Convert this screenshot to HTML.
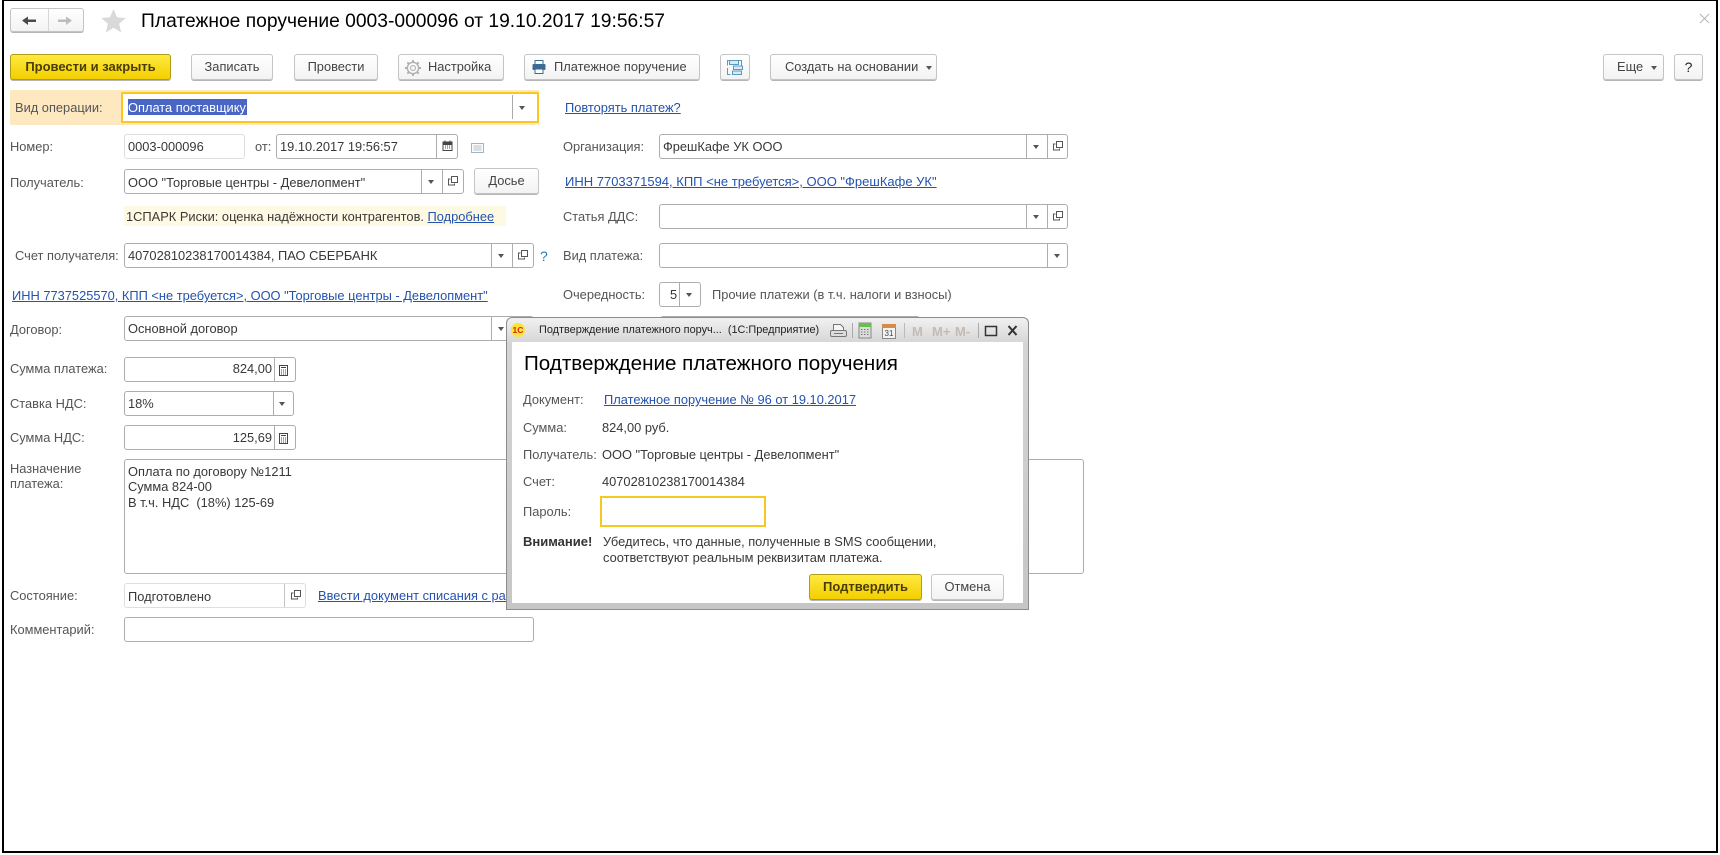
<!DOCTYPE html>
<html lang="ru"><head><meta charset="utf-8"><title>Платежное поручение</title>
<style>
html,body{margin:0;padding:0;background:#fff}
#p{position:relative;width:1720px;height:855px;overflow:hidden;background:#fff;font:12.85px/16px "Liberation Sans",sans-serif;color:#3c3c3c}
#frame{position:absolute;left:2px;top:0;width:1716px;height:853px;box-sizing:border-box;border:solid #000;border-width:1.5px 2px 2px 2px}
.t{position:absolute;white-space:nowrap;font-size:12.85px;line-height:16px;margin-top:1px}
.n{margin-top:0}
.l{color:#555}
.v{color:#383838}
a,.a{color:#2352b0;text-decoration:underline}
.f{position:absolute;box-sizing:border-box;border:1px solid #adadad;border-radius:3px;background:#fff}
.g{border-color:#dedede}
.d{position:absolute;top:0;bottom:0;width:1px;background:#adadad}
.ar{position:absolute;width:0;height:0;border:3px solid transparent;border-top:4px solid #555;border-bottom:0}
.b{position:absolute;box-sizing:border-box;top:54px;height:26px;border:1px solid #c4c4c4;border-radius:3px;background:linear-gradient(#fff,#f3f3f3);box-shadow:0 1px 0 #b5b5b5;text-align:center;line-height:24px;color:#444;white-space:nowrap;font-size:12.85px}
.y{background:linear-gradient(#ffe93f,#f3cf00);border-color:#b39b16;color:#4a3d00;font-weight:bold;font-size:13px}
svg{position:absolute;overflow:visible}
</style></head><body><div id="p">
<div id="frame"></div>

<!-- nav -->
<div class="b" style="left:10px;top:8px;width:74px;height:24px"></div>
<div style="position:absolute;left:48px;top:9px;width:1px;height:22px;background:#d6d6d6"></div>
<svg style="left:0;top:0" width="130" height="36"><path d="M22 20.500l6-4v3h8v2.500h-8v3z" fill="#4a4a4a"/><path d="M72 20.500l-6-4v3h-8v2.500h8v3z" fill="#bcbcbc"/><path d="M113.500 9l3.500 8.300 8.800.7-6.700 5.800 2.100 8.700-7.700-4.700-7.700 4.700 2.100-8.700-6.700-5.800 8.800-.7z" fill="#d9d9d9"/></svg>
<div class="t n" style="left:141px;top:11px;font-size:19.250px;line-height:22px;color:#000">Платежное поручение 0003-000096 от 19.10.2017 19:56:57</div>
<svg style="left:1699px;top:13px" width="12" height="12"><path d="M1 1l9 9M10 1l-9 9" stroke="#b5b5b5" fill="none"/></svg>

<!-- toolbar -->
<div class="b y" style="left:10px;width:161px">Провести и закрыть</div>
<div class="b" style="left:191px;width:82px">Записать</div>
<div class="b" style="left:294px;width:84px">Провести</div>
<div class="b" style="left:398px;width:106px;text-align:left;padding-left:29px">Настройка</div>
<svg style="left:405px;top:60px" width="16" height="16" viewBox="0 0 15 15"><circle cx="7.500" cy="7.500" r="5.300" fill="none" stroke="#b0b0b0" stroke-width="1.300"/><circle cx="7.500" cy="7.500" r="2.300" fill="none" stroke="#b0b0b0"/><path d="M7.500 0v2.500M7.500 12.500V15M0 7.500h2.500M12.500 7.500H15M2.200 2.200L4 4M11 11l1.800 1.800M12.800 2.200L11 4M4 11l-1.800 1.800" stroke="#b0b0b0" stroke-width="1.800"/></svg>
<div class="b" style="left:524px;width:176px;text-align:left;padding-left:29px">Платежное поручение</div>
<svg style="left:532px;top:60px" width="14" height="14" viewBox="0 0 14 14"><rect x="3" y="0.500" width="8" height="4" fill="none" stroke="#3d6a95"/><rect x="0.500" y="4" width="13" height="6" rx="1" fill="#3d6a95"/><rect x="3" y="9" width="8" height="4.500" fill="#fff" stroke="#3d6a95"/></svg>
<div class="b" style="left:720px;width:30px"></div>
<svg style="left:727px;top:60px" width="16" height="15" viewBox="0 0 16 15"><path d="M.5 5.500v-5h2M.5 8v6.500h3" fill="none" stroke="#5a9ac0"/><rect x="2.500" y=".5" width="9" height="4" fill="#dcebf3" stroke="#5a9ac0"/><rect x="6.500" y="6" width="9" height="3.500" fill="#dcebf3" stroke="#5a9ac0"/><rect x="5.500" y="11" width="9" height="3.500" fill="#dcebf3" stroke="#5a9ac0"/><path d="M11.500 .5h3v5.500" fill="none" stroke="#5a9ac0"/></svg>
<div class="b" style="left:770px;width:167px;text-align:left;padding-left:14px">Создать на основании</div>
<div class="ar" style="left:926px;top:66px"></div>
<div class="b" style="left:1603px;width:61px;text-align:left;padding-left:13px">Еще</div>
<div class="ar" style="left:1651px;top:66px"></div>
<div class="b" style="left:1674px;width:29px;font-size:14px;color:#222">?</div>

<!-- Вид операции -->
<div style="position:absolute;left:10px;top:90px;width:529px;height:35px;background:#fde8c0"></div>
<div class="t l" style="left:15px;top:99px">Вид операции:</div>
<div style="position:absolute;box-sizing:border-box;left:121px;top:92px;width:418px;height:31px;border:2px solid #fbc720;background:#fff;border-radius:1px"></div>
<div style="position:absolute;left:512px;top:95px;width:1px;height:24px;background:#aaa"></div>
<div class="ar" style="left:519px;top:106px"></div>
<div style="position:absolute;left:128px;top:99px;width:119px;height:16px;background:#4a66c4"></div>
<div class="t" style="left:128px;top:99px;color:#fff">Оплата поставщику</div>
<div class="t a" style="left:565px;top:99px">Повторять платеж?</div>

<!-- Номер -->
<div class="t l" style="left:10px;top:138px">Номер:</div>
<div class="f g" style="left:124px;top:134px;width:121px;height:25px"></div>
<div class="t v" style="left:128px;top:138px">0003-000096</div>
<div class="t l" style="left:255px;top:138px">от:</div>
<div class="f" style="left:276px;top:134px;width:182px;height:25px"><div class="d" style="left:159px"></div></div>
<div class="t v" style="left:280px;top:138px">19.10.2017 19:56:57</div>
<svg style="left:442px;top:140px" width="12" height="12" viewBox="0 0 12 12"><rect x="1" y="2" width="9" height="8.500" fill="none" stroke="#444"/><path d="M1 2h9v2.500H1zM3 .5v2M8 .5v2M3 6h1M5 6h1M7 6h1M3 8h1M5 8h1M7 8h1" stroke="#444" fill="#444" stroke-width="1"/></svg>
<svg style="left:471px;top:143px" width="13" height="10" viewBox="0 0 13 10"><rect x=".5" y=".5" width="12" height="9" fill="#fafbfc" stroke="#a5b4c2"/><path d="M2.500 3h8M2.500 5h8M2.500 7h8" stroke="#b5c2cd"/></svg>

<div class="t l" style="left:563px;top:138px">Организация:</div>
<div class="f" style="left:659px;top:134px;width:409px;height:25px"><div class="d" style="left:366px"></div><div class="d" style="left:387px"></div></div>
<div class="t v" style="left:663px;top:138px">ФрешКафе УК ООО</div>
<div class="ar" style="left:1033px;top:145px"></div>
<svg style="left:1053px;top:141px" width="10" height="10"><path d="M3.500.5h6v6h-6zM2.500 3H.5v6h6V7.500" fill="none" stroke="#555"/></svg>

<!-- Получатель -->
<div class="t l" style="left:10px;top:174px">Получатель:</div>
<div class="f" style="left:124px;top:169px;width:340px;height:25px"><div class="d" style="left:296px"></div><div class="d" style="left:317px"></div></div>
<div class="t v" style="left:128px;top:174px">ООО "Торговые центры - Девелопмент"</div>
<div class="ar" style="left:428px;top:180px"></div>
<svg style="left:448px;top:176px" width="10" height="10"><path d="M3.500.5h6v6h-6zM2.500 3H.5v6h6V7.500" fill="none" stroke="#555"/></svg>
<div class="b" style="left:474px;top:168px;width:65px;height:26px">Досье</div>
<div class="t a" style="left:565px;top:173px;font-size:13px">ИНН 7703371594, КПП &lt;не требуется&gt;, ООО "ФрешКафе УК"</div>

<!-- Спарк -->
<div style="position:absolute;left:124px;top:206px;width:382px;height:20px;background:#fef9e2"></div>
<div class="t v" style="left:126px;top:208px">1СПАРК Риски: оценка надёжности контрагентов. <span class="a">Подробнее</span></div>

<div class="t l" style="left:563px;top:208px">Статья ДДС:</div>
<div class="f" style="left:659px;top:204px;width:409px;height:25px"><div class="d" style="left:366px"></div><div class="d" style="left:387px"></div></div>
<div class="ar" style="left:1033px;top:215px"></div>
<svg style="left:1053px;top:211px" width="10" height="10"><path d="M3.500.5h6v6h-6zM2.500 3H.5v6h6V7.500" fill="none" stroke="#555"/></svg>

<!-- Счет -->
<div class="t l" style="left:15px;top:247px">Счет получателя:</div>
<div class="f" style="left:124px;top:243px;width:410px;height:25px"><div class="d" style="left:366px"></div><div class="d" style="left:387px"></div></div>
<div class="t v" style="left:128px;top:247px">40702810238170014384, ПАО СБЕРБАНК</div>
<div class="ar" style="left:498px;top:254px"></div>
<svg style="left:518px;top:250px" width="10" height="10"><path d="M3.500.5h6v6h-6zM2.500 3H.5v6h6V7.500" fill="none" stroke="#555"/></svg>
<div class="t" style="left:540px;top:247px;color:#1f7fc0;font-size:14px">?</div>
<div class="t l" style="left:563px;top:247px">Вид платежа:</div>
<div class="f" style="left:659px;top:243px;width:409px;height:25px"><div class="d" style="left:387px"></div></div>
<div class="ar" style="left:1054px;top:254px"></div>

<div class="t a" style="left:12px;top:287px">ИНН 7737525570, КПП &lt;не требуется&gt;, ООО "Торговые центры - Девелопмент"</div>
<div class="t l" style="left:563px;top:286px">Очередность:</div>
<div class="f" style="left:659px;top:282px;width:42px;height:25px"><div class="d" style="left:19px"></div></div>
<div class="t v" style="left:670px;top:286px">5</div>
<div class="ar" style="left:686px;top:293px"></div>
<div class="t l" style="left:712px;top:286px">Прочие платежи (в т.ч. налоги и взносы)</div>

<!-- Договор -->
<div class="t l" style="left:10px;top:321px">Договор:</div>
<div class="f" style="left:124px;top:316px;width:410px;height:25px"><div class="d" style="left:366px"></div></div>
<div class="t v n" style="left:128px;top:321px">Основной договор</div>
<div class="ar" style="left:498px;top:327px"></div>
<div class="f" style="left:660px;top:316px;width:260px;height:25px"></div>

<!-- Суммы -->
<div class="t l n" style="left:10px;top:361px">Сумма платежа:</div>
<div class="f" style="left:124px;top:357px;width:172px;height:25px"><div class="d" style="left:149px"></div></div>
<div class="t v n" style="right:1448px;top:361px">824,00</div>
<svg style="left:279px;top:365px" width="10" height="11"><rect x=".5" y=".5" width="8" height="10" fill="none" stroke="#444"/><path d="M2 2.500h5M2 5h1M4 5h1M6 5h1M2 7h1M4 7h1M6 7h1M2 9h1M4 9h1M6 9h1" stroke="#444"/></svg>
<div class="t l" style="left:10px;top:395px">Ставка НДС:</div>
<div class="f" style="left:124px;top:391px;width:170px;height:25px"><div class="d" style="left:148px"></div></div>
<div class="t v" style="left:128px;top:395px">18%</div>
<div class="ar" style="left:279px;top:402px"></div>
<div class="t l" style="left:10px;top:429px">Сумма НДС:</div>
<div class="f" style="left:124px;top:425px;width:172px;height:25px"><div class="d" style="left:149px"></div></div>
<div class="t v" style="right:1448px;top:429px">125,69</div>
<svg style="left:279px;top:433px" width="10" height="11"><rect x=".5" y=".5" width="8" height="10" fill="none" stroke="#444"/><path d="M2 2.500h5M2 5h1M4 5h1M6 5h1M2 7h1M4 7h1M6 7h1M2 9h1M4 9h1M6 9h1" stroke="#444"/></svg>

<!-- Назначение -->
<div class="t l" style="left:10px;top:460px">Назначение</div>
<div class="t l n" style="left:10px;top:476px">платежа:</div>
<div class="f" style="left:124px;top:459px;width:960px;height:115px"></div>
<div class="t v n" style="left:128px;top:464px">Оплата по договору №1211</div>
<div class="t v n" style="left:128px;top:479px">Сумма 824-00</div>
<div class="t v n" style="left:128px;top:495px">В т.ч. НДС&nbsp; (18%) 125-69</div>

<div class="t l" style="left:10px;top:587px">Состояние:</div>
<div class="f g" style="left:124px;top:583px;width:182px;height:25px"><div class="d" style="left:159px;background:#c4c4c4"></div></div>
<div class="t v" style="left:128px;top:588px">Подготовлено</div>
<svg style="left:291px;top:590px" width="10" height="10"><path d="M3.500.5h6v6h-6zM2.500 3H.5v6h6V7.500" fill="none" stroke="#555"/></svg>
<div class="t a n" style="left:318px;top:588px">Ввести документ списания с расчетного счета</div>
<div class="t l" style="left:10px;top:621px">Комментарий:</div>
<div class="f" style="left:124px;top:617px;width:410px;height:25px"></div>

<!-- Dialog -->
<div style="position:absolute;left:506px;top:317px;width:523px;height:293px;box-sizing:border-box;border:1px solid #8c8c8c;border-radius:6px 6px 0 0;background:linear-gradient(#f1f1f1,#d4d4d4 9%,#c6c6c6 100%)"></div>
<div style="position:absolute;left:512px;top:342px;width:511px;height:261px;background:#fff"></div>
<svg style="left:511px;top:323px" width="14" height="14" viewBox="0 0 14 14"><circle cx="7" cy="7" r="7" fill="#fde23a"/><text x="1.500" y="10" font-family="Liberation Sans" font-size="8.500" font-weight="bold" fill="#d02a1a">1С</text></svg>
<div class="t n" style="left:539px;top:322px;font-size:10.900px;color:#222">Подтверждение платежного поруч...&nbsp; (1С:Предприятие)</div>
<svg style="left:828px;top:320px" width="200" height="20">
<path d="M5.500 4.500h7l3 3v3h-10z" fill="#f5f5f5" stroke="#777"/><rect x="2.500" y="10.500" width="16" height="6" rx="1.500" fill="#ddd" stroke="#777"/><path d="M6 13.500h9" stroke="#777"/>
<path d="M24.500 3v15" stroke="#aaa"/>
<rect x="31" y="3" width="12" height="15" fill="#ddd" stroke="#888"/><rect x="31" y="3" width="12" height="4" fill="#66c04a"/><path d="M33 9.500h8M33 12h8M33 14.500h8" stroke="#777" stroke-dasharray="1.500 1.500"/>
<rect x="54.500" y="4.500" width="13" height="14" fill="#f3f3f3" stroke="#888"/><rect x="54" y="4" width="14" height="4" fill="#d98b4a"/>
<text x="61" y="16" text-anchor="middle" font-family="Liberation Sans" font-size="8" fill="#444">31</text>
<path d="M76.500 3v15" stroke="#bbb"/>
<text x="84" y="16" font-family="Liberation Sans" font-size="13" font-weight="bold" fill="#c4bcb4">M</text>
<text x="104" y="16" font-family="Liberation Sans" font-size="13" font-weight="bold" fill="#c4bcb4">M+</text>
<text x="127" y="16" font-family="Liberation Sans" font-size="13" font-weight="bold" fill="#c4bcb4">M-</text>
<path d="M150.500 3v15" stroke="#aaa"/>
<rect x="157.500" y="6.500" width="11" height="9" fill="none" stroke="#333" stroke-width="1.500"/>
<path d="M180.500 6l8 9M188.500 6l-8 9" stroke="#333" stroke-width="2"/>
</svg>

<div class="t n" style="left:524px;top:353px;font-size:20.600px;line-height:22px;color:#000">Подтверждение платежного поручения</div>
<div class="t l n" style="left:523px;top:392px">Документ:</div>
<div class="t a n" style="left:604px;top:392px">Платежное поручение № 96 от 19.10.2017</div>
<div class="t l n" style="left:523px;top:420px">Сумма:</div>
<div class="t v n" style="left:602px;top:420px">824,00 руб.</div>
<div class="t l n" style="left:523px;top:447px">Получатель:</div>
<div class="t v n" style="left:602px;top:447px">ООО "Торговые центры - Девелопмент"</div>
<div class="t l n" style="left:523px;top:474px">Счет:</div>
<div class="t v n" style="left:602px;top:474px">40702810238170014384</div>
<div class="t l n" style="left:523px;top:504px">Пароль:</div>
<div style="position:absolute;box-sizing:border-box;left:600px;top:496px;width:166px;height:31px;border:2px solid #f7c823;background:#fff"></div>
<div class="t n" style="left:523px;top:534px;font-weight:bold;font-size:13px;color:#333">Внимание!</div>
<div class="t v n" style="left:603px;top:534px">Убедитесь, что данные, полученные в SMS сообщении,</div>
<div class="t v n" style="left:603px;top:550px">соответствуют реальным реквизитам платежа.</div>
<div class="b y" style="left:809px;top:574px;width:113px">Подтвердить</div>
<div class="b" style="left:931px;top:574px;width:73px">Отмена</div>

</div></body></html>
